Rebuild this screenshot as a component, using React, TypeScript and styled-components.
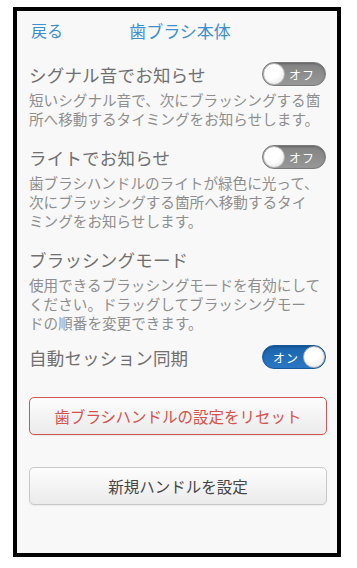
import React from "react";
import styled, { createGlobalStyle } from "styled-components";

const Global = createGlobalStyle`
  html, body { margin: 0; padding: 0; background: #ffffff; }
  body { font-family: "Noto Sans CJK JP", "Noto Sans", sans-serif; }
`;

const Frame = styled.div`
  margin: 7px 0 0 13px;
  width: 320px;
  height: 542px;
  border: 4px solid #000;
  background: #f8f8f8;
  box-sizing: content-box;
  display: flex;
  flex-direction: column;
`;

const Content = styled.div`
  display: flex;
  flex-direction: column;
  padding: 0 10px 0 12px;
`;

const Header = styled.div`
  height: 38px;
  display: grid;
  grid-template-columns: 1fr auto 1fr;
  align-items: center;
`;

const Back = styled.span`
  color: #3d8fcf;
  font-size: 16px;
  padding-left: 2px;
`;

const Title = styled.span`
  color: #3d8fcf;
  font-size: 17px;
  padding-left: 4px;
`;

const Section = styled.div<{ $gap: number }>`
  display: flex;
  flex-direction: column;
  margin-top: ${(p) => p.$gap}px;
`;

const Row = styled.div`
  height: 24px;
  display: flex;
  align-items: center;
  justify-content: space-between;
`;

const Label = styled.span`
  color: #707070;
  font-size: 17.5px;
  letter-spacing: 0.2px;
`;

const Desc = styled.p`
  margin: 4px 0 0;
  color: #8e8e8e;
  font-size: 14.6px;
  line-height: 19px;
  white-space: nowrap;
`;

const Pill = styled.div<{ $on: boolean }>`
  width: 64px;
  height: 24px;
  border-radius: 12px;
  box-sizing: border-box;
  border: 1px solid ${(p) => (p.$on ? "#155a9c" : "#7a7a7a")};
  background: ${(p) =>
    p.$on
      ? "linear-gradient(#1a63ad, #2a78c4)"
      : "linear-gradient(#828282, #989898)"};
  box-shadow: inset 0 1px 2px rgba(0, 0, 0, 0.25);
  display: flex;
  flex-direction: ${(p) => (p.$on ? "row" : "row-reverse")};
  align-items: center;
  justify-content: space-between;
  margin-right: 1px;
`;

const PillText = styled.span<{ $on: boolean }>`
  color: #fff;
  font-size: 12px;
  padding: ${(p) => (p.$on ? "0 0 0 10px" : "0 10px 0 0")};
  letter-spacing: 1px;
`;

const Knob = styled.span`
  width: 22px;
  height: 22px;
  border-radius: 50%;
  box-sizing: border-box;
  border: 1px solid #b5b5b5;
  background: radial-gradient(circle at 40% 35%, #ffffff 40%, #e2e2e2 100%);
`;

const Button = styled.div<{ $danger?: boolean; $gap: number }>`
  margin-top: ${(p) => p.$gap}px;
  height: 38px;
  width: 298px;
  box-sizing: border-box;
  border-radius: 5px;
  border: 1px solid ${(p) => (p.$danger ? "#d45454" : "#c9c9c9")};
  background: linear-gradient(#fdfdfd, #ebebeb);
  box-shadow: 0 1px 1px rgba(0, 0, 0, 0.06);
  color: ${(p) => (p.$danger ? "#d6524c" : "#464646")};
  font-size: 15.5px;
  display: flex;
  align-items: center;
  justify-content: center;
`;

const Toggle: React.FC<{ on: boolean }> = ({ on }) => (
  <Pill $on={on}>
    <PillText $on={on}>{on ? "オン" : "オフ"}</PillText>
    <Knob />
  </Pill>
);

export default function App() {
  return (
    <>
      <Global />
      <Frame>
        <Content>
          <Header>
            <Back>戻る</Back>
            <Title>歯ブラシ本体</Title>
            <span />
          </Header>
          <Section $gap={13}>
            <Row>
              <Label>シグナル音でお知らせ</Label>
              <Toggle on={false} />
            </Row>
            <Desc>
              短いシグナル音で、次にブラッシングする箇
              <br />
              所へ移動するタイミングをお知らせします。
            </Desc>
          </Section>
          <Section $gap={17}>
            <Row>
              <Label>ライトでお知らせ</Label>
              <Toggle on={false} />
            </Row>
            <Desc>
              歯ブラシハンドルのライトが緑色に光って、
              <br />
              次にブラッシングする箇所へ移動するタイ
              <br />
              ミングをお知らせします。
            </Desc>
          </Section>
          <Section $gap={17}>
            <Row>
              <Label>ブラッシングモード</Label>
            </Row>
            <Desc>
              使用できるブラッシングモードを有効にして
              <br />
              ください。ドラッグしてブラッシングモー
              <br />
              ドの順番を変更できます。
            </Desc>
          </Section>
          <Section $gap={13}>
            <Row>
              <Label>自動セッション同期</Label>
              <Toggle on={true} />
            </Row>
          </Section>
          <Button $danger $gap={28}>
            歯ブラシハンドルの設定をリセット
          </Button>
          <Button $gap={32}>新規ハンドルを設定</Button>
        </Content>
      </Frame>
    </>
  );
}
